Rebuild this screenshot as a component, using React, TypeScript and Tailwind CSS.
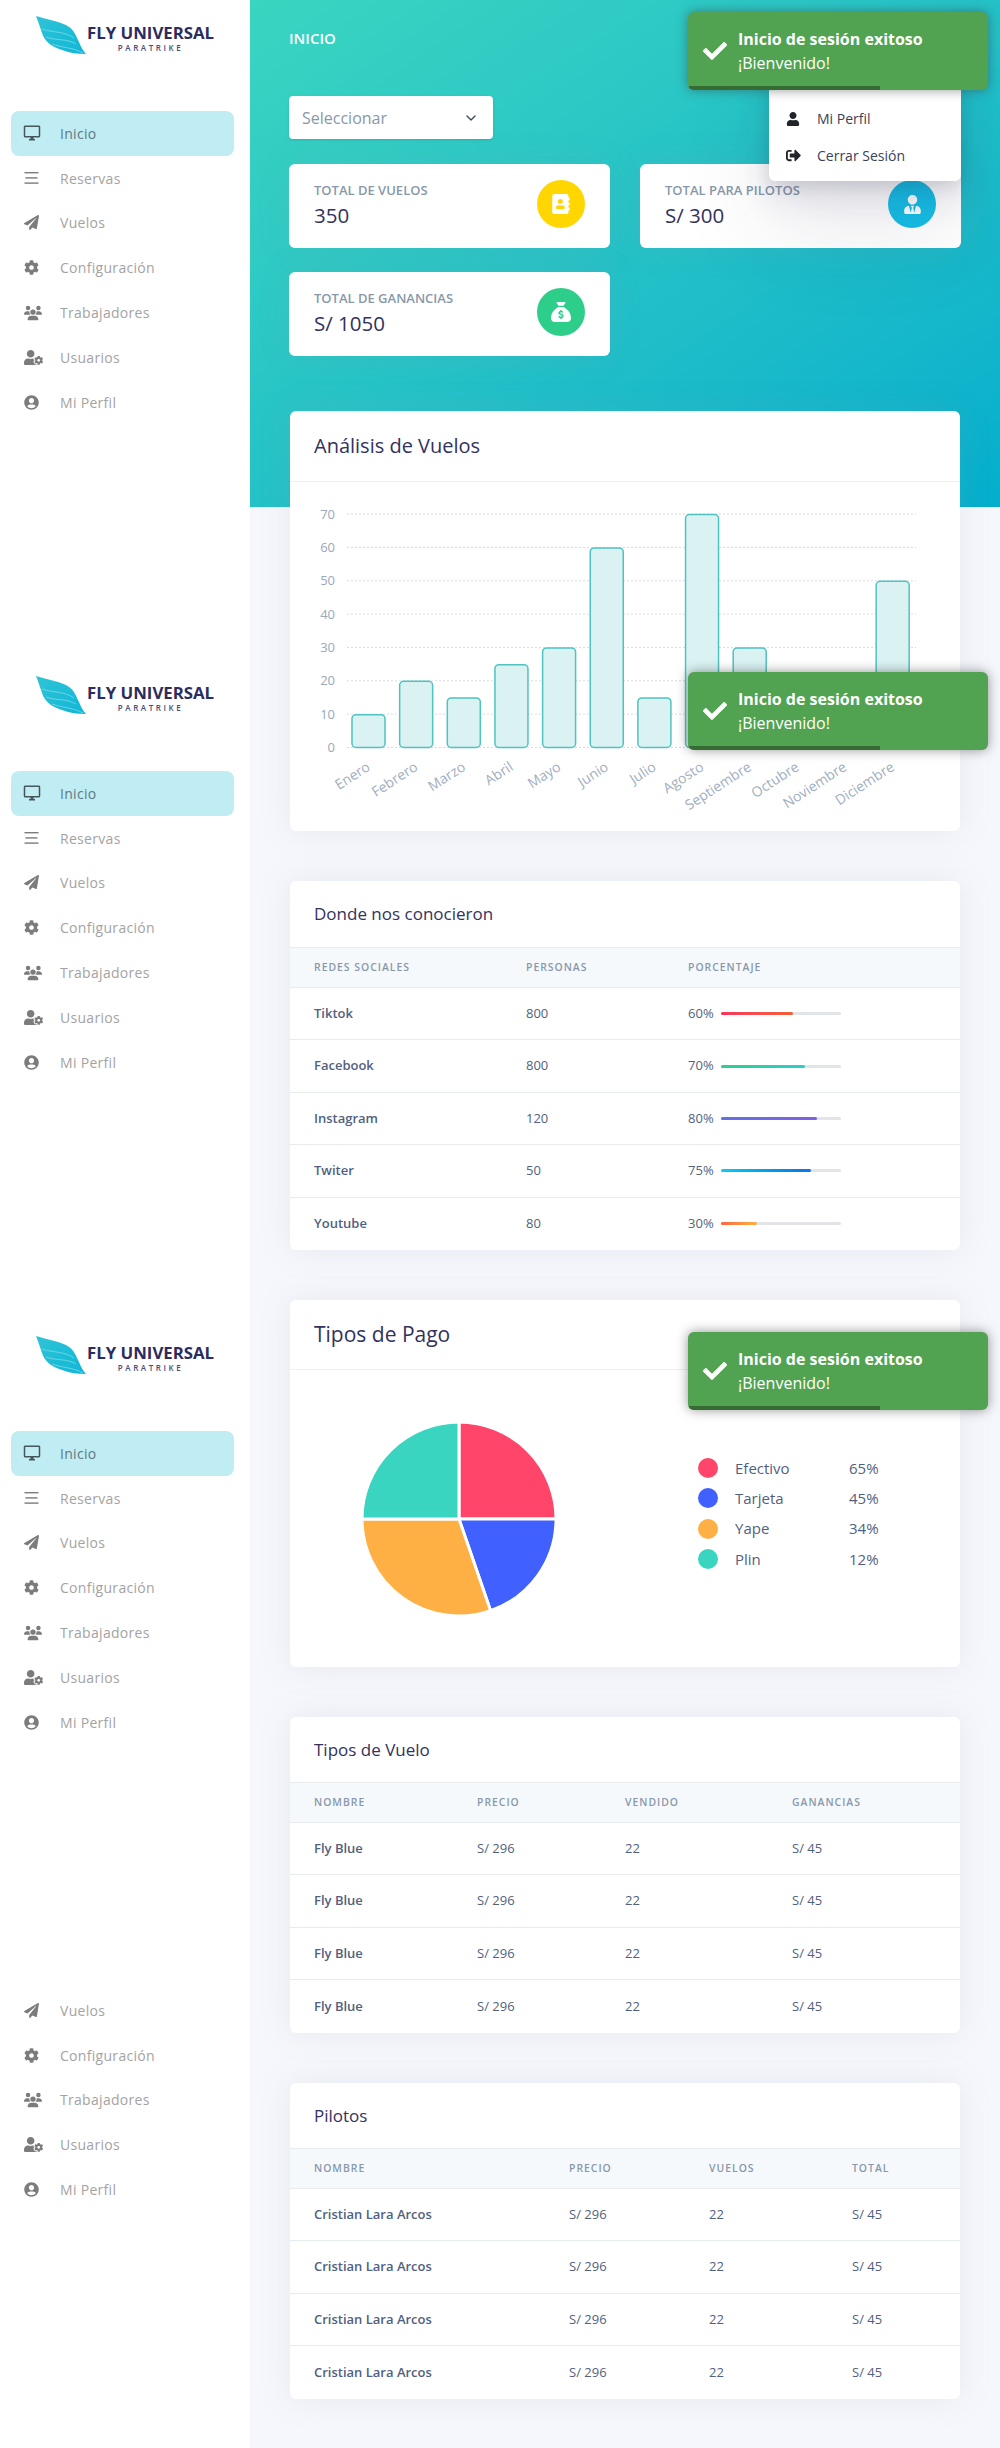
import { FaAddressBook, FaCheck, FaCog, FaPaperPlane, FaSignOutAlt, FaUser, FaUserCircle, FaUserCog, FaUserTie } from 'react-icons/fa'
import { FaSackDollar, FaUsers } from 'react-icons/fa6'
import { MdOutlineDesktopWindows } from 'react-icons/md'
import { ChevronDown } from 'lucide-react'

const BarsIcon = () => (
  <svg viewBox="0 0 15 12" className="w-[15px] h-[12px]" fill="currentColor">
    <rect x="0.5" y="0" width="14" height="1.4" />
    <rect x="1.5" y="5.2" width="12" height="1.4" />
    <rect x="0.5" y="10.4" width="14" height="1.4" />
  </svg>
)

const navItems = [
  { label: 'Inicio', icon: <MdOutlineDesktopWindows className="text-[18px] -ml-[1.5px]" /> },
  { label: 'Reservas', icon: <BarsIcon /> },
  { label: 'Vuelos', icon: <FaPaperPlane className="text-[15px]" /> },
  { label: 'Configuración', icon: <FaCog className="text-[15px]" /> },
  { label: 'Trabajadores', icon: <FaUsers className="text-[18px]" /> },
  { label: 'Usuarios', icon: <FaUserCog className="text-[19px]" /> },
  { label: 'Mi Perfil', icon: <FaUserCircle className="text-[15px]" /> },
]

const NavRow = ({ label, icon, active }: { label: string; icon: React.ReactNode; active?: boolean }) => (
  <div
    className={`flex items-center h-[44.8px] px-[13px] rounded-lg text-[14px] tracking-[0.3px] ${
      active ? 'bg-[#c0ecf3] text-[#5d7a82]' : 'text-[#a3a3a3]'
    }`}
  >
    <span className={`w-[36px] shrink-0 flex items-center ${active ? 'text-[#46565c]' : 'text-[#7c7c7c]'}`}>{icon}</span>
    {label}
  </div>
)

const Logo = () => (
  <div className="flex items-start pl-[36px] pt-4">
    <svg viewBox="36 16 50 38" className="w-[50px] h-[38px] shrink-0">
      <defs>
        <linearGradient id="wing" x1="0" y1="0" x2="1" y2="1">
          <stop offset="0" stopColor="#2fc4d6" />
          <stop offset="1" stopColor="#0fb6d6" />
        </linearGradient>
      </defs>
      <path d="M36 16 C48 20 58 21 66 25 C74 29 76 36 79 42 C81 47 83 51 86 54 C78 54 70 53 62 50 C52 47 45 42 42 33 C40 27 38 21 36 16 Z" fill="url(#wing)" />
      <path d="M42 29 C54 33 64 31 74 38 M46 37 C56 41 66 38 76 44 M52 44 C62 48 72 47 83 53" fill="none" stroke="#9fe3ee" strokeWidth="0.6" />
    </svg>
    <div className="ml-[1px] pt-[8px] flex flex-col items-center">
      <span className="text-[16.8px] leading-[18px] font-bold text-[#2c2c60] whitespace-nowrap">FLY UNIVERSAL</span>
      <span className="text-[8px] leading-[10px] mt-[1px] tracking-[2.6px] font-semibold text-[#4a4a7c]">PARATRIKE</span>
    </div>
  </div>
)

const SidebarBlock = () => (
  <div className="h-[660px]">
    <div className="h-[111px]">
      <Logo />
    </div>
    <nav className="ml-[11px] w-[223px]">
      {navItems.map((item, i) => (
        <NavRow key={item.label} label={item.label} icon={item.icon} active={i === 0} />
      ))}
    </nav>
  </div>
)

const Toast = ({ top }: { top: string }) => (
  <div className={`absolute left-[688px] ${top} w-[300px] h-[78px] rounded-md bg-[#51a351] text-white shadow-[0_0_12px_rgba(60,60,60,0.55)] flex items-center pl-[15px] overflow-hidden`}>
    <FaCheck className="text-[24px] shrink-0" />
    <div className="ml-[11px]">
      <p className="text-[16px] leading-[24px] font-bold">Inicio de sesión exitoso</p>
      <p className="text-[16px] leading-[24px]">¡Bienvenido!</p>
    </div>
    <div className="absolute left-0 bottom-0 h-1 w-[192px] bg-[#366b34] rounded-bl-md" />
  </div>
)

const StatCard = ({ label, value, icon, color }: { label: string; value: string; icon: React.ReactNode; color: string }) => (
  <div className="h-[84px] bg-white rounded-md shadow-[0_0_2rem_0_rgba(136,152,170,0.15)] pl-[25px] pr-[25px] pt-[16px] flex justify-between">
    <div>
      <p className="text-[13px] leading-[20px] font-semibold uppercase text-[#8898aa]">{label}</p>
      <p className="text-[20.5px] leading-[30px] font-medium text-[#32325d]">{value}</p>
    </div>
    <div className={`w-12 h-12 rounded-full flex items-center justify-center text-white ${color}`}>{icon}</div>
  </div>
)

const Card = ({ children, className = '' }: { children: React.ReactNode; className?: string }) => (
  <section className={`bg-white rounded-md shadow-[0_0_2rem_0_rgba(136,152,170,0.15)] overflow-hidden ${className}`}>{children}</section>
)

const months = ['Enero', 'Febrero', 'Marzo', 'Abril', 'Mayo', 'Junio', 'Julio', 'Agosto', 'Septiembre', 'Octubre', 'Noviembre', 'Diciembre']
const flights = [10, 20, 15, 25, 30, 60, 15, 70, 30, 12, 8, 50]
const ticks = [70, 60, 50, 40, 30, 20, 10, 0]

const valueY = (v: number) => 747.5 - v * 3.335

const BarChart = () => (
  <svg viewBox="290 482 670 349" className="w-full h-[349px] block font-['Open_Sans',sans-serif]">
    {ticks.map((t) => (
      <g key={t}>
        <line x1="347" x2="916" y1={valueY(t)} y2={valueY(t)} stroke="#d6dbe1" strokeDasharray="2 2" />
        <text x="335" y={valueY(t) + 4.5} textAnchor="end" fontSize="13" fill="#9aa8bb">{t}</text>
      </g>
    ))}
    {flights.map((v, i) => {
      const x = 352 + i * 47.65
      const top = valueY(v)
      return (
        <g key={months[i]}>
          <rect x={x} y={top + 0.5} width="33" height={747 - top} rx="4" fill="#daf2f2" stroke="#4fc2c2" strokeWidth="1.5" />
          <text x={x + 17} y="770" textAnchor="end" fontSize="14" fill="#a0aec0" transform={`rotate(-33 ${x + 17} 766)`}>{months[i]}</text>
        </g>
      )
    })}
  </svg>
)

const sources = [
  { name: 'Tiktok', people: '800', pct: 60, bar: 'from-[#f5365c] to-[#f56036]' },
  { name: 'Facebook', people: '800', pct: 70, bar: 'from-[#2dce89] to-[#2dcecc]' },
  { name: 'Instagram', people: '120', pct: 80, bar: 'from-[#5e72e4] to-[#825ee4]' },
  { name: 'Twiter', people: '50', pct: 75, bar: 'from-[#11cdef] to-[#1171ef]' },
  { name: 'Youtube', people: '80', pct: 30, bar: 'from-[#fb6340] to-[#fbb140]' },
]

const TableHead = ({ cols, labels }: { cols: string; labels: string[] }) => (
  <div className={`grid ${cols} items-center h-[41px] px-6 bg-[#f6f9fc] border-y border-[#e9ecef]`}>
    {labels.map((l) => (
      <span key={l} className="text-[10.4px] font-semibold tracking-[1px] uppercase text-[#8898aa]">{l}</span>
    ))}
  </div>
)

const TableRow = ({ cols, cells, last }: { cols: string; cells: string[]; last?: boolean }) => (
  <div className={`grid ${cols} items-center h-[52.5px] px-6 text-[13px] text-[#525f7f] ${last ? '' : 'border-b border-[#e9ecef]'}`}>
    {cells.map((c, i) => (
      <span key={i} className={i === 0 ? 'font-semibold' : ''}>{c}</span>
    ))}
  </div>
)

const flightCols = 'grid-cols-[163px_148px_167px_1fr]'
const pilotCols = 'grid-cols-[255px_140px_143px_1fr]'

const legend = [
  { label: 'Efectivo', pct: '65%', color: 'bg-[#ff4569]' },
  { label: 'Tarjeta', pct: '45%', color: 'bg-[#4060ff]' },
  { label: 'Yape', pct: '34%', color: 'bg-[#ffb044]' },
  { label: 'Plin', pct: '12%', color: 'bg-[#39d5c0]' },
]

const PieChart = () => (
  <svg viewBox="0 0 200 200" className="w-[200px] h-[200px] shrink-0" stroke="#fff" strokeWidth="3">
    <path d="M100 100 L100 3 A97 97 0 0 1 197 100 Z" fill="#ff4569" />
    <path d="M100 100 L197 100 A97 97 0 0 1 131.6 191.7 Z" fill="#4060ff" />
    <path d="M100 100 L131.6 191.7 A97 97 0 0 1 3 100 Z" fill="#ffb044" />
    <path d="M100 100 L3 100 A97 97 0 0 1 100 3 Z" fill="#39d5c0" />
  </svg>
)

export default function App() {
  return (
    <div className="relative flex w-[1000px] h-[2448px] overflow-hidden bg-[#f6f7fc] font-['Open_Sans',sans-serif]">
      <aside className="w-[250px] shrink-0 bg-white">
        <SidebarBlock />
        <SidebarBlock />
        <SidebarBlock />
        <nav className="ml-[11px] w-[223px] pt-[8px]">
          {navItems.slice(2).map((item) => (
            <NavRow key={item.label} label={item.label} icon={item.icon} />
          ))}
        </nav>
      </aside>

      <main className="relative flex-1 min-w-0">
        <div className="h-[507px] px-[39px] bg-linear-to-br from-[#3ad5c0] to-[#03aecd]">
          <p className="pt-[28px] text-[15px] leading-[20px] font-semibold text-white">INICIO</p>
          <div className="mt-[48px] w-[204px] h-[43px] pl-[13px] pr-[14px] bg-white rounded-[4px] shadow-sm flex items-center justify-between text-[#8898aa] text-[16px]">
            Seleccionar
            <ChevronDown size={16} strokeWidth={2} className="text-[#3d4654]" />
          </div>
          <div className="mt-[25px] grid grid-cols-2 gap-x-[30px] gap-y-[24px]">
            <StatCard label="Total de vuelos" value="350" color="bg-[#ffd600]" icon={<FaAddressBook className="text-[20px]" />} />
            <StatCard label="Total para pilotos" value="S/ 300" color="bg-[#15bfe6]" icon={<FaUserTie className="text-[19px]" />} />
            <StatCard label="Total de ganancias" value="S/ 1050" color="bg-[#2dce89]" icon={<FaSackDollar className="text-[20px]" />} />
          </div>
        </div>

        <div className="px-[40px] -mt-[96px] flex flex-col gap-[50px]">
          <Card className="h-[420px]">
            <h3 className="h-[71px] px-6 flex items-center text-[20px] font-medium text-[#32325d] border-b border-[#eef0f3]">Análisis de Vuelos</h3>
            <BarChart />
          </Card>

          <Card>
            <h3 className="h-[66px] px-6 flex items-center text-[17px] font-medium text-[#32325d]">Donde nos conocieron</h3>
            <TableHead cols="grid-cols-[212px_162px_1fr]" labels={['Redes sociales', 'Personas', 'Porcentaje']} />
            {sources.map((s, i) => (
              <div key={s.name} className={`grid grid-cols-[212px_162px_1fr] items-center h-[52.4px] px-6 text-[13px] text-[#525f7f] ${i < 4 ? 'border-b border-[#e9ecef]' : ''}`}>
                <span className="font-semibold">{s.name}</span>
                <span>{s.people}</span>
                <div className="flex items-center">
                  <span className="w-[33px]">{s.pct}%</span>
                  <div className="w-[120px] h-[3px] rounded bg-[#e2e5e8]">
                    <div className={`h-full rounded bg-linear-to-r ${s.bar}`} style={{ width: `${s.pct}%` }} />
                  </div>
                </div>
              </div>
            ))}
          </Card>

          <Card className="h-[367px]">
            <h3 className="h-[70px] px-6 flex items-center text-[21px] font-medium text-[#32325d] border-b border-[#eef0f3]">Tipos de Pago</h3>
            <div className="flex items-start pt-[49px] pl-[69px]">
              <PieChart />
              <div className="ml-[139px] mt-[39px] flex flex-col gap-[10.3px]">
                {legend.map((l) => (
                  <div key={l.label} className="flex items-center h-5 text-[15px] text-[#525f7f]">
                    <span className={`w-5 h-5 rounded-full ${l.color}`} />
                    <span className="ml-[17px] w-[114px]">{l.label}</span>
                    <span>{l.pct}</span>
                  </div>
                ))}
              </div>
            </div>
          </Card>

          <Card>
            <h3 className="h-[65px] px-6 flex items-center text-[17px] font-medium text-[#32325d]">Tipos de Vuelo</h3>
            <TableHead cols={flightCols} labels={['Nombre', 'Precio', 'Vendido', 'Ganancias']} />
            {[0, 1, 2, 3].map((i) => (
              <TableRow key={i} cols={flightCols} cells={['Fly Blue', 'S/ 296', '22', 'S/ 45']} last={i === 3} />
            ))}
          </Card>

          <Card>
            <h3 className="h-[65px] px-6 flex items-center text-[17px] font-medium text-[#32325d]">Pilotos</h3>
            <TableHead cols={pilotCols} labels={['Nombre', 'Precio', 'Vuelos', 'Total']} />
            {[0, 1, 2, 3].map((i) => (
              <TableRow key={i} cols={pilotCols} cells={['Cristian Lara Arcos', 'S/ 296', '22', 'S/ 45']} last={i === 3} />
            ))}
          </Card>
        </div>

        <div className="absolute top-[70px] right-[39px] w-[192px] h-[111px] bg-white rounded-md shadow-[0_50px_100px_rgba(50,50,93,0.1),0_15px_35px_rgba(50,50,93,0.15),0_5px_15px_rgba(0,0,0,0.1)] pt-[30px] text-[14px] text-[#3a4256]">
          <div className="flex items-center h-[37px] pl-[17px]">
            <FaUser className="w-[14px] text-[#212529] text-[14px]" />
            <span className="ml-[17px]">Mi Perfil</span>
          </div>
          <div className="flex items-center h-[37px] pl-[17px]">
            <FaSignOutAlt className="w-[15px] text-[#212529] text-[15px]" />
            <span className="ml-[16px]">Cerrar Sesión</span>
          </div>
        </div>
      </main>

      <Toast top="top-[12px]" />
      <Toast top="top-[672px]" />
      <Toast top="top-[1332px]" />
    </div>
  )
}
